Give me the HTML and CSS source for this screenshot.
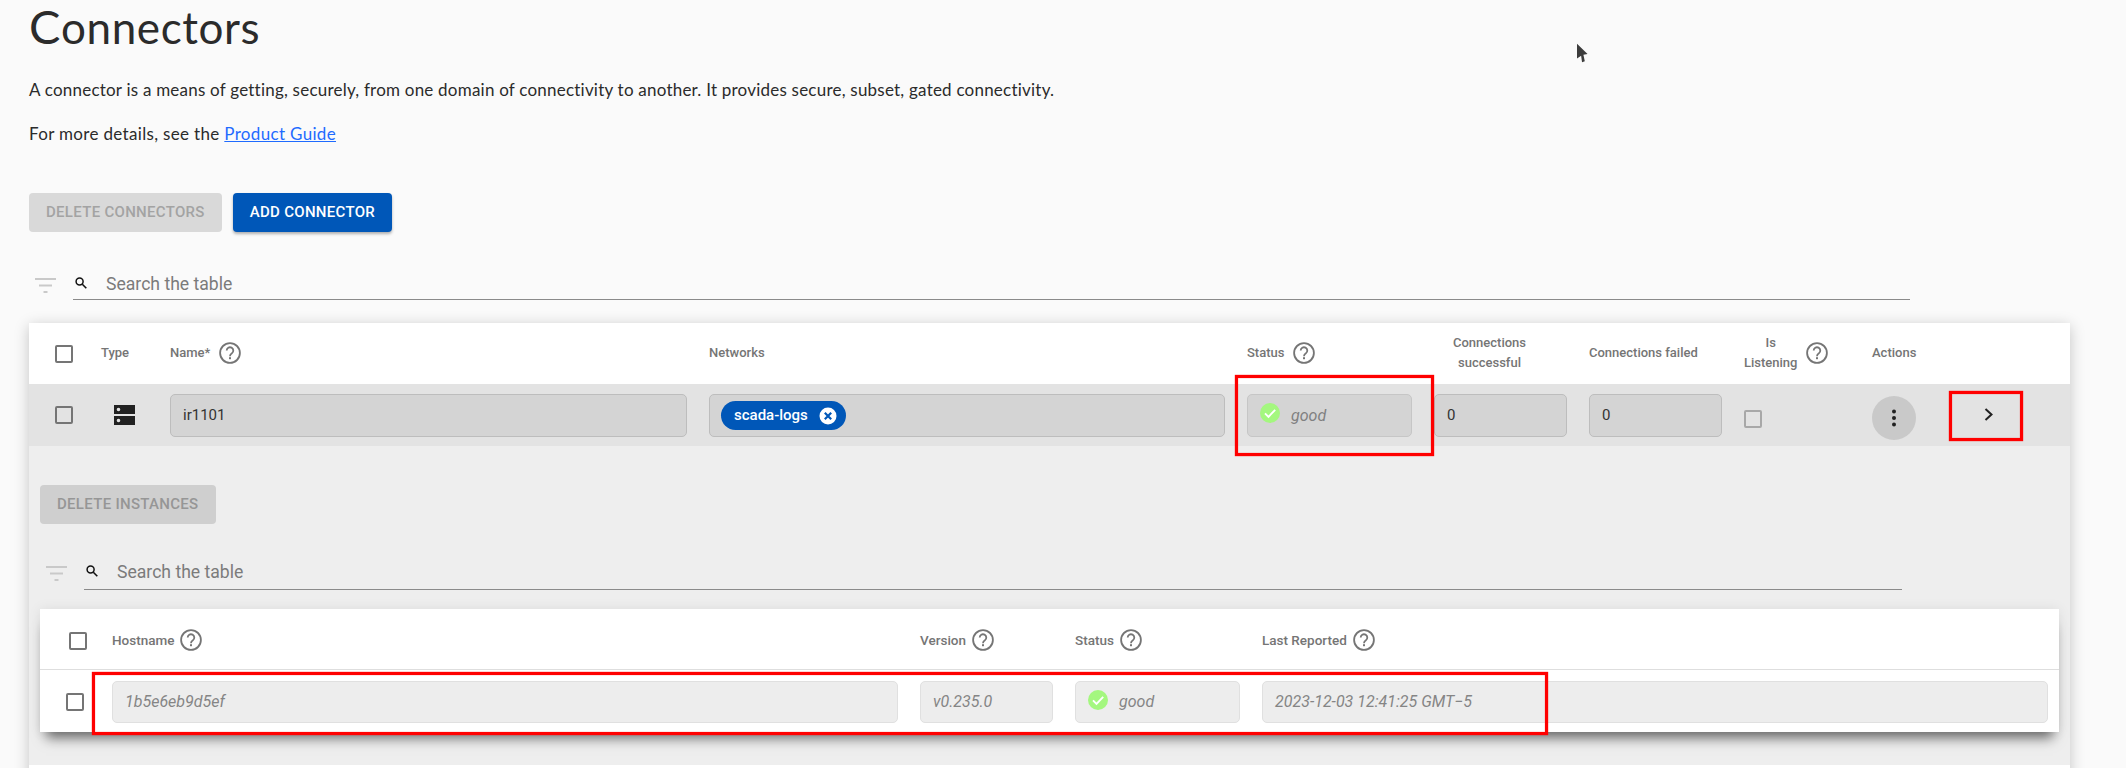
FILE: index.html
```html
<!DOCTYPE html>
<html lang="en">
<head>
<meta charset="utf-8">
<title>Connectors</title>
<link rel="stylesheet" href="styles.css">
</head>
<body>
<svg class="defs" width="0" height="0" aria-hidden="true">
  <defs>
    <symbol id="help" viewBox="0 0 22 22">
      <circle cx="11" cy="11" r="9.9" fill="none" stroke="currentColor" stroke-width="1.8"/>
      <path d="M7.700 8.600a3.300 3.300 0 1 1 5.200 2.700c-1.200.8-1.900 1.400-1.900 2.900" fill="none" stroke="currentColor" stroke-width="1.800"/>
      <rect x="10" y="15.200" width="2" height="2" fill="currentColor"/>
    </symbol>
    <symbol id="filter" viewBox="0 0 21 15">
      <path d="M0 1h21M4 7.500h13M8.500 14h4" fill="none" stroke="currentColor" stroke-width="2"/>
    </symbol>
    <symbol id="search" viewBox="0 0 12 12">
      <circle cx="4.600" cy="4.600" r="3.500" fill="none" stroke="currentColor" stroke-width="1.500"/>
      <path d="M7.300 7.300l4 4" fill="none" stroke="currentColor" stroke-width="1.600"/>
    </symbol>
    <symbol id="ok" viewBox="0 0 20 20">
      <circle cx="10" cy="10" r="10" fill="#a4f77f"/>
      <path d="M5 10.300l3.500 3.500L15.200 6.800" fill="none" stroke="#fff" stroke-width="1.900"/>
    </symbol>
  </defs>
</svg>

<main class="page">
  <h1 class="title">Connectors</h1>
  <p class="lead">A connector is a means of getting, securely, from one domain of connectivity to another. It provides secure, subset, gated connectivity.</p>
  <p class="lead second">For more details, see the <a class="link" href="#guide">Product Guide</a></p>

  <div class="actions">
    <button class="btn btn-disabled" type="button" disabled>Delete connectors</button>
    <button class="btn btn-primary" type="button">Add connector</button>
  </div>

  <div class="searchbar">
    <svg class="filter-icon"><use href="#filter"/></svg>
    <div class="searchfield">
      <svg class="search-icon"><use href="#search"/></svg>
      <span class="placeholder">Search the table</span>
    </div>
  </div>

  <section class="card">
    <div class="grid head">
      <span class="box"></span>
      <span class="th">Type</span>
      <span class="th">Name* <svg class="help"><use href="#help"/></svg></span>
      <span class="th">Networks</span>
      <span class="th">Status <svg class="help"><use href="#help"/></svg></span>
      <span class="th two">Connections<br>successful</span>
      <span class="th">Connections failed</span>
      <span class="th"><span class="two">Is<br>Listening</span> <svg class="help"><use href="#help"/></svg></span>
      <span class="th">Actions</span>
      <span></span>
    </div>
    <div class="grid row">
      <span class="box"></span>
      <svg class="type-icon" viewBox="0 0 21 20">
        <path fill="#212121" fill-rule="evenodd" d="M0 0h21v9H0zM0 11h21v9H0zM4.500 2.700a1.800 1.800 0 1 0 0 3.600 1.800 1.800 0 0 0 0-3.600zM4.500 13.700a1.800 1.800 0 1 0 0 3.600 1.800 1.800 0 0 0 0-3.600z"/>
      </svg>
      <div class="field">ir1101</div>
      <div class="field">
        <span class="chip">scada-logs
          <svg class="chip-x" viewBox="0 0 18 18"><circle cx="9" cy="9" r="8.500" fill="#fff"/><path d="M5.800 5.800l6.400 6.400M12.200 5.800l-6.400 6.400" stroke="#0057b8" stroke-width="2.200"/></svg>
        </span>
      </div>
      <div class="field muted status"><svg class="ok"><use href="#ok"/></svg>good</div>
      <div class="field">0</div>
      <div class="field">0</div>
      <span class="box box-off"></span>
      <button class="menu" type="button" aria-label="Actions">
        <svg viewBox="0 0 6 18" class="dots"><circle cx="3" cy="2.500" r="2"/><circle cx="3" cy="9" r="2"/><circle cx="3" cy="15.500" r="2"/></svg>
      </button>
      <svg class="chevron" viewBox="0 0 9 13"><path d="M1.500 1l6 5.500-6 5.500" fill="none" stroke="#212121" stroke-width="2"/></svg>
    </div>

    <div class="detail">
      <button class="btn btn-disabled darker" type="button" disabled>Delete instances</button>
      <div class="searchbar inner">
        <svg class="filter-icon"><use href="#filter"/></svg>
        <div class="searchfield">
          <svg class="search-icon"><use href="#search"/></svg>
          <span class="placeholder">Search the table</span>
        </div>
      </div>
      <div class="subcard">
        <div class="subgrid subhead">
          <span class="box"></span>
          <span class="th">Hostname <svg class="help"><use href="#help"/></svg></span>
          <span class="th">Version <svg class="help"><use href="#help"/></svg></span>
          <span class="th">Status <svg class="help"><use href="#help"/></svg></span>
          <span class="th">Last Reported <svg class="help"><use href="#help"/></svg></span>
        </div>
        <div class="subgrid subrow">
          <span class="box shift"></span>
          <div class="field light">1b5e6eb9d5ef</div>
          <div class="field light">v0.235.0</div>
          <div class="field light status"><svg class="ok"><use href="#ok"/></svg>good</div>
          <div class="field light">2023-12-03 12:41:25 GMT−5</div>
        </div>
      </div>
    </div>
  </section>
</main>

<div class="mark mark-status"></div>
<div class="mark mark-chevron"></div>
<div class="mark mark-instance"></div>
<svg class="cursor" viewBox="0 0 12 20"><path d="M0 0l11.500 11-4.500 1 1.500 7-3 1-1-7L0 16z" fill="#3c3c3c"/></svg>
</body>
</html>
```
FILE: styles.css
```css
* { box-sizing: border-box; }
html, body { height: 768px; overflow: hidden; }
body { margin: 0; background: #fafafa; color: #212121; font-family: Roboto, sans-serif; position: relative; }
.defs { position: absolute; }

.page { padding: 0 56px 0 29px; }
.title { margin: 0; height: 66px; font: 400 44px/52px Lato, sans-serif; color: #2b2b2b; letter-spacing: .6px; }
.title::first-letter { font-size: 47px; }
.lead { margin: 12px 0 0; font: 400 17px/24px Lato, sans-serif; letter-spacing: .22px; color: #2b2b2b; }
.lead.second { margin-top: 20px; letter-spacing: .33px; }
.link { color: #1f6bff; }

.actions { display: flex; gap: 11px; margin-top: 47px; }
.btn { height: 39px; border: 0; border-radius: 4px; padding: 0 17px; font: 500 15px/39px Roboto, sans-serif; letter-spacing: .3px; text-transform: uppercase; }
.btn-disabled { background: #d9d9d9; color: #a3a3a3; }
.btn-disabled.darker { background: #cfcfcf; color: #969696; display: block; }
.btn-primary { background: #0057b8; color: #fff; box-shadow: 0 2px 3px rgba(0,0,0,.3); }

.searchbar { display: flex; align-items: flex-start; margin-top: 40px; height: 28px; }
.filter-icon { width: 21px; height: 15px; margin: 6px 17px 0 6px; color: #c9c9c9; flex: none; }
.searchfield { flex: none; width: 1837px; height: 28px; border-bottom: 1px solid #8a8a8a; display: flex; align-items: flex-start; }
.search-icon { width: 12px; height: 12px; margin: 5px 19px 0 2px; color: #111; flex: none; }
.placeholder { font: 400 17.6px/24px Roboto, sans-serif; color: #7b7b7b; }

.card { margin-top: 23px; width: 2041px; height: 460px; background: #fff; box-shadow: 0 3px 14px rgba(0,0,0,.22); }
.grid { display: grid; grid-template-columns: 24px 47px 517px 516px 165px 133px 133px 106px 55px 74px; column-gap: 22px; padding-left: 26px; align-items: center; }
.head { height: 61px; }
.row { height: 62px; background: #e3e3e3; }

.th { font: 500 13px/20px Roboto, sans-serif; color: #757575; display: inline-flex; align-items: center; gap: 9px; white-space: nowrap; margin-top: -1px; }
.two { display: inline-block; text-align: center; }
.th.two { display: block; width: 111px; }
.help { width: 22px; height: 22px; flex: none; color: #757575; }
.subhead .th { font-size: 13.5px; margin-top: 1px; gap: 6px; }

.box { display: block; width: 18px; height: 18px; border: 2px solid #757575; border-radius: 2px; background: transparent; }
.box-off { border-color: #a8a8a8; margin-top: 8px; }
.box.shift { margin-left: -3px; margin-top: 2px; }
.subhead .box { margin-top: 3px; }

.type-icon { width: 21px; height: 20px; margin-left: 13px; }
.field { height: 43px; border: 1px solid #bdbdbd; border-radius: 5px; background: #d4d4d4; padding: 1px 12px 0; font: 400 15px/41px Roboto, sans-serif; color: #333; display: flex; align-items: center; white-space: nowrap; }
.field.muted { font: italic 400 16px/41px Roboto, sans-serif; color: #808080; border-color: #c6c6c6; }
.status .ok { margin-right: 11px; flex: none; }
.ok { width: 20px; height: 20px; margin-top: -6px; }
.chip { display: inline-flex; align-items: center; gap: 11px; height: 29px; margin-left: -1px; padding: 0 2px 0 13px; border-radius: 15px; background: #0057b8; color: #fff; font: 500 15px/29px Roboto, sans-serif; }
.chip-x { width: 18px; height: 18px; margin-right: 7px; }

.menu { width: 44px; height: 44px; border: 0; border-radius: 50%; padding: 0; background: #c9c9c9; display: flex; align-items: center; justify-content: center; margin-top: 6px; }
.dots { width: 6px; height: 18px; fill: #212121; }
.chevron { width: 9px; height: 13px; justify-self: center; margin-top: -1px; margin-left: 4px; }

.detail { height: 319px; background: #eeeeee; padding: 39px 11px 0; }
.searchbar.inner { margin-top: 38px; }
.inner .filter-icon { margin-top: 4px; }
.inner .searchfield { width: 1818px; }
.inner .search-icon { margin-top: 3px; }
.inner .placeholder { line-height: 20px; }
.subcard { width: 2019px; height: 123px; background: #fff; margin-top: 19px; box-shadow: 0 12px 12px -6px rgba(0,0,0,.55), 0 0 12px rgba(0,0,0,.08); }
.subgrid { display: grid; grid-template-columns: 21px 786px 133px 165px 786px; column-gap: 22px; padding-left: 29px; align-items: center; }
.subhead { height: 61px; border-bottom: 1px solid #dedede; }
.subrow { height: 62px; }
.field.light { background: #ededed; border-color: #e0e0e0; color: #858585; font: italic 400 16px/40px Roboto, sans-serif; height: 42px; margin-top: 2px; padding-top: 0; }
.field.light .ok { margin-top: -4px; }

.mark { position: absolute; border: 3px solid #f00; box-shadow: 0 0 1px #f00, inset 0 0 1px #f00; }
.mark-status { left: 1235px; top: 375px; width: 199px; height: 81px; }
.mark-chevron { left: 1949px; top: 391px; width: 74px; height: 50px; }
.mark-instance { left: 92px; top: 672px; width: 1456px; height: 63px; }
.cursor { position: absolute; left: 1577px; top: 43px; width: 11px; height: 20px; }
```
